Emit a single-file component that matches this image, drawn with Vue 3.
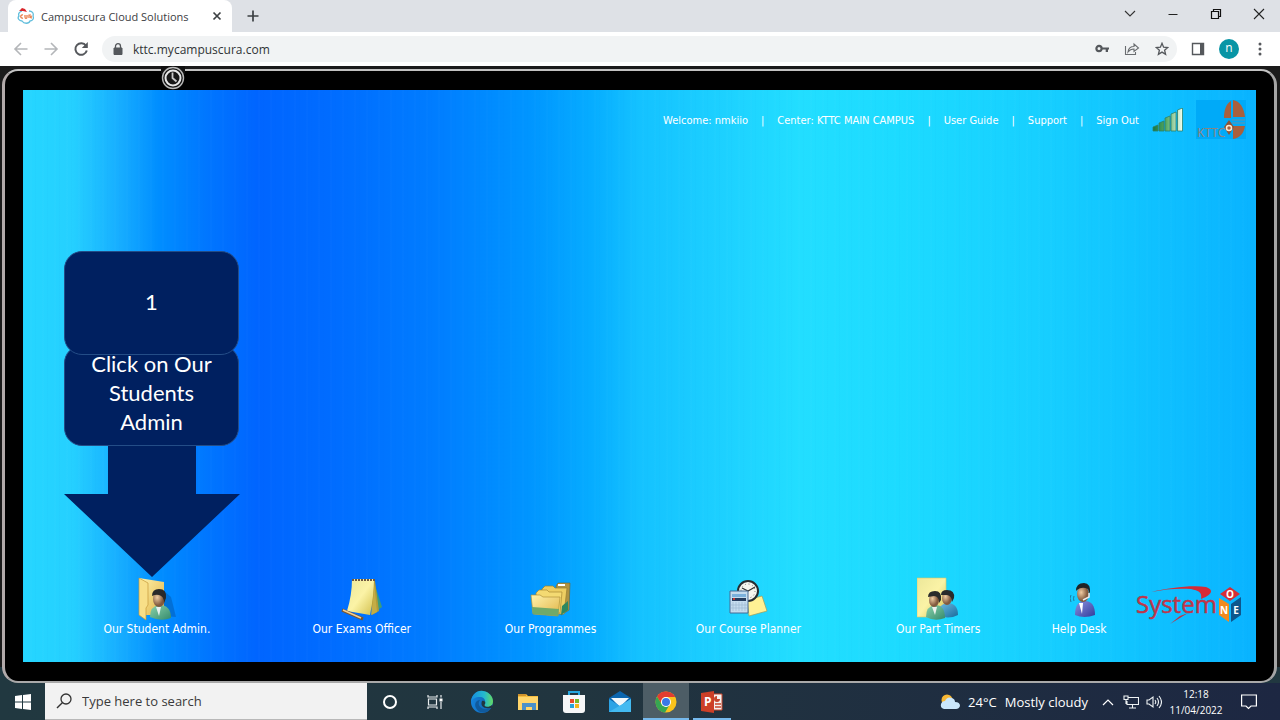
<script setup>
const topLinks = ['Welcome: nmkiio', 'Center: KTTC MAIN CAMPUS', 'User Guide', 'Support', 'Sign Out']
</script>

<template>
  <div class="page">
    <header class="tabstrip">
      <div class="tab">
        <svg class="favicon" width="18" height="18" viewBox="0 0 18 18">
          <path d="M5 4C2 5 1 7 2 9c-2 2 0 5 3 5 2 3 7 3 8 0 3 0 4-3 3-5 1-3-1-5-4-5" fill="#fff" stroke="#62bedc" stroke-width="1.3" />
          <path d="M2 4l3-3 3 1 2 3-4-1z" fill="#d9262b" />
          <path d="M6 8c-3-1-3 4 0 3M8 8v2c0 2 2 2 2 0V8M12 11V8l2 0M15 11c-2 0-2-2 0-2" fill="none" stroke="#e8743c" stroke-width="1.2" />
        </svg>
        <span class="tab-title">Campuscura Cloud Solutions</span>
        <button class="plain close" aria-label="Close tab">
          <svg width="10" height="10" viewBox="0 0 10 10"><path d="M1.500 1.500l7 7M8.500 1.500l-7 7" stroke="#3c4043" stroke-width="1.700" /></svg>
        </button>
      </div>
      <button class="plain newtab" aria-label="New tab">
        <svg width="12" height="12" viewBox="0 0 12 12"><path d="M6 0.500v11M0.500 6h11" stroke="#3c4043" stroke-width="1.700" /></svg>
      </button>
      <div class="window-controls">
        <button class="plain" aria-label="Search tabs"><svg width="12" height="12" viewBox="0 0 12 12"><path d="M1 3l5 5 5-5" fill="none" stroke="#333" stroke-width="1.100" /></svg></button>
        <button class="plain" aria-label="Minimise"><svg width="12" height="12" viewBox="0 0 12 12"><path d="M1.500 6.500h9" stroke="#222" /></svg></button>
        <button class="plain" aria-label="Restore"><svg width="12" height="12" viewBox="0 0 12 12"><path d="M1.500 3.500h7v7h-7zM3.500 3.500v-2h7v7h-2" fill="none" stroke="#111" stroke-width="1.200" /></svg></button>
        <button class="plain" aria-label="Close"><svg width="12" height="12" viewBox="0 0 12 12"><path d="M1 1l10 10M11 1L1 11" stroke="#222" stroke-width="1.100" /></svg></button>
      </div>
    </header>

    <div class="toolbar">
      <button class="plain tool" aria-label="Back"><svg width="16" height="16" viewBox="0 0 16 16"><path d="M14.500 8h-12M8 2L2 8l6 6" fill="none" stroke="#b4b6b9" stroke-width="1.600" /></svg></button>
      <button class="plain tool" aria-label="Forward"><svg width="16" height="16" viewBox="0 0 16 16"><path d="M1.500 8h12M8 2l6 6-6 6" fill="none" stroke="#b4b6b9" stroke-width="1.600" /></svg></button>
      <button class="plain tool" aria-label="Reload"><svg width="16" height="16" viewBox="0 0 16 16"><path d="M13 4.700A5.800 5.800 0 1 0 13.800 9.500" fill="none" stroke="#55585c" stroke-width="2" /><path d="M14.800 1v6H8.800z" fill="#55585c" /></svg></button>
      <form class="address" @submit.prevent>
        <svg width="10" height="12" viewBox="0 0 10 12"><path d="M1 5h8v6.500H1z" fill="#55585c" stroke="#55585c" stroke-linejoin="round" /><path d="M2.500 5V3.200a2.500 2.500 0 0 1 5 0V5" fill="none" stroke="#55585c" stroke-width="1.300" /></svg>
        <input class="url" type="text" aria-label="Address" value="kttc.mycampuscura.com" />
        <button class="plain addr-btn" type="button" aria-label="Passwords"><svg width="14" height="10" viewBox="0 0 14 10"><circle cx="4" cy="4.500" r="2.600" fill="none" stroke="#55585c" stroke-width="2.200" /><path d="M6.500 3.500H14v2h-1V8h-2.300V5.500H6.500z" fill="#55585c" /></svg></button>
        <button class="plain addr-btn" type="button" aria-label="Share"><svg width="16" height="14" viewBox="0 0 16 14"><path d="M1.500 4v8.500h10V10M4 10c.5-4 2.500-5.500 6-5.500V2l4.500 4L10 9.500V7C7.500 7 5.500 8 4 10z" fill="none" stroke="#6a6d70" stroke-width="1.100" /></svg></button>
        <button class="plain addr-btn" type="button" aria-label="Bookmark"><svg width="14" height="14" viewBox="0 0 14 14"><path d="M7 1.300l1.600 3.900 4.200.3-3.200 2.700 1 4.200L7 10.100l-3.600 2.300 1-4.200L1.200 5.500l4.200-.3z" fill="none" stroke="#55585c" stroke-width="1.300" /></svg></button>
      </form>
      <button class="plain side" aria-label="Side panel"><svg width="14" height="14" viewBox="0 0 14 14"><path d="M1.500 1.500h11v11h-11z" fill="none" stroke="#55585c" stroke-width="1.400" /><path d="M9 1h4v12H9z" fill="#55585c" /></svg></button>
      <button class="plain avatar" aria-label="Profile">n</button>
      <button class="plain more" aria-label="Menu"><svg width="4" height="14" viewBox="0 0 4 14" fill="#55585c"><circle cx="2" cy="2" r="1.500" /><circle cx="2" cy="7" r="1.500" /><circle cx="2" cy="12" r="1.500" /></svg></button>
    </div>

    <main class="device">
      <div class="bezel">
        <svg class="clock-badge" width="24" height="24" viewBox="0 0 24 24"><path d="M0 0h24v8H0z" fill="#111" /><circle cx="12" cy="12" r="10.500" fill="#151515" stroke="#b9b9b9" stroke-width="1.400" /><circle cx="12" cy="12" r="7.500" fill="#181818" stroke="#e6e6e6" stroke-width="2" /><path d="M11.500 6.500V12l4 3.500" fill="none" stroke="#c9c9c9" stroke-width="1.800" /></svg>
        <section class="screen">
          <div class="topbar">
            <nav class="top-links">
              <template v-for="(link, i) in topLinks" :key="link">
                <span v-if="i" class="bar">|</span>
                <a href="#">{{ link }}</a>
              </template>
            </nav>
            <svg class="signal" width="32" height="24" viewBox="0 0 32 24">
              <defs><linearGradient id="sg"><stop offset="0" stop-color="#16783f" /><stop offset=".45" stop-color="#57aa65" /><stop offset="1" stop-color="#f2fff0" /></linearGradient></defs>
              <g fill="url(#sg)" stroke="#2c8069" stroke-width=".8"><path d="M1 19l5-2v6H1zM7 15l5-2v10H7zM13 10l5-2v15h-5zM19 6l5-2v19h-5zM25.500 2l5-2v23h-5z" /></g>
            </svg>
            <svg class="kttc" width="50" height="40" viewBox="0 0 50 40">
              <path d="M0 0h50v39H0z" fill="#00aaf8" />
              <path d="M35 1c-5 3-7 9-7 17h7zM37 0c7 1 11 8 12 17H37zM37 26h12c-1 7-5 12-12 13z" fill="#a9603d" />
              <path d="M33 20l5 7-5 8-5-8z" fill="#8c5437" />
              <path d="M36 20h13M36 23h13" stroke="#6f8ea4" />
              <circle cx="33" cy="28" r="2.500" fill="#a9603d" stroke="#ffe9cf" stroke-width="1.500" />
              <text x="1" y="37" class="kttc-word">KTTC</text>
            </svg>
          </div>

          <div class="callout">
            <div class="step number">1</div>
            <div class="step words">Click on Our Students Admin</div>
            <svg width="176" height="131" viewBox="0 0 176 131"><path d="M44 0h88v48h44L88 131 0 48h44z" fill="#002060" /></svg>
          </div>

          <nav class="shortcuts">
            <a href="#" class="shortcut">
              <svg width="40" height="44" viewBox="0 0 40 44">
                <defs>
                  <linearGradient id="fold" x1="0" y1="0" x2="1" y2="1"><stop offset="0" stop-color="#fff3ad" /><stop offset="1" stop-color="#e0b447" /></linearGradient>
                  <linearGradient id="note" x1="0" y1="0" x2="1" y2="1"><stop offset="0" stop-color="#ece79a" /><stop offset=".5" stop-color="#fbf3a6" /><stop offset="1" stop-color="#d2bf4c" /></linearGradient>
                  <radialGradient id="face" cx=".35" cy=".4"><stop offset="0" stop-color="#f0cda3" /><stop offset="1" stop-color="#825a3f" /></radialGradient>
                  <linearGradient id="green" x1="0" y1="0" x2="1" y2="1"><stop offset="0" stop-color="#8bd3ac" /><stop offset="1" stop-color="#348a6c" /></linearGradient>
                  <linearGradient id="blue" x1="0" y1="0" x2="1" y2="1"><stop offset="0" stop-color="#71bde2" /><stop offset="1" stop-color="#176b9d" /></linearGradient>
                </defs>
                <path d="M27 39l12 1-5-20-7-6z" fill="#08295a" opacity=".25" />
                <path d="M2 1l25 4v33H9z" fill="url(#fold)" /><path d="M2 1l9 5v22l-2 3v12L2 38z" fill="#f8df88" stroke="#c59a39" stroke-width=".7" />
                <path d="M13 40q0-11 9-12 12 0 12 13-10 4-21-1z" fill="url(#green)" /><path d="M19 30l3 9 2-9z" fill="#e7f1ef" />
                <ellipse cx="22" cy="22" rx="6" ry="8" fill="url(#face)" /><path d="M15 19q0-7 7-7 8 0 7 9l-2 5q0-7-5-8-3-1-7 1z" fill="#29292a" />
              </svg>
              <span>Our Student Admin.</span>
            </a>
            <a href="#" class="shortcut">
              <svg width="42" height="44" viewBox="0 0 42 44">
                <path d="M33 5l8 25-8 6z" fill="#3a9c7e" /><path d="M28 5l6-1 4 30-7 4z" fill="#b29b38" />
                <path d="M11 2h22q0 16-4 36L6 34Q11 18 11 2z" fill="url(#note)" />
                <path d="M33 4l3 31-6 3q3-18 3-34z" fill="#c4ad46" />
                <path d="M11 3h23" stroke="#6d5742" stroke-width="2" stroke-dasharray="2 1" />
                <path d="M1 33l21 9" stroke="#7b5730" stroke-width="3" /><path d="M2 33l18 8" stroke="#f3cf94" stroke-width="1.600" />
              </svg>
              <span>Our Exams Officer</span>
            </a>
            <a href="#" class="shortcut">
              <svg width="42" height="44" viewBox="0 0 42 44">
                <path d="M26 9l2-3h12l-1 27-8 5z" fill="#af9342" stroke="#70642e" stroke-width=".6" /><path d="M12 12l3-3h8l2 2h12l-3 26H13z" fill="#edce62" stroke="#967e31" stroke-width=".7" />
                <path d="M6 16l3-3h8l2 2h13l-2 21H7z" fill="#f4da72" stroke="#a98a34" stroke-width=".7" />
                <path d="M1 18h9l3 2h17l-2 19-25-2z" fill="url(#fold)" stroke="#b1933b" stroke-width=".7" /><path d="M2 30l27 2-1 7-25-2z" fill="#6fa969" /><path d="M31 38l7-5v-9l-6 5z" fill="#2e8860" />
                <path d="M28 8h7" stroke="#fff" stroke-width="2" />
              </svg>
              <span>Our Programmes</span>
            </a>
            <a href="#" class="shortcut">
              <svg width="42" height="44" viewBox="0 0 42 44">
                <path d="M20 23l15-4 5 15-18 5z" fill="#fff194" stroke="#a59c56" stroke-width=".7" />
                <circle cx="21" cy="14" r="10" fill="#f6f5ef" stroke="#282c30" stroke-width="2" /><circle cx="21" cy="14" r="7" fill="none" stroke="#777" stroke-dasharray="1 2.700" /><path d="M15 11l6 3 7-4" fill="none" stroke="#333" stroke-width="1.200" />
                <path d="M3 14h18v22H3z" fill="#c5dcef" stroke="#476b95" /><path d="M5 17h14v3H5z" fill="#7ab0dc" /><path d="M5 21h14v3H5z" fill="#263c5e" /><path d="M6 25v9M9 25v9M12 25v9M15 25v9M18 25v9M4 28h16M4 31h16" stroke="#9fb9d2" stroke-width=".7" /><path d="M6 22h2" stroke="#c73636" stroke-width="2" />
              </svg>
              <span>Our Course Planner</span>
            </a>
            <a href="#" class="shortcut">
              <svg width="42" height="44" viewBox="0 0 42 44">
                <path d="M0 1h29v39H0z" fill="url(#note)" stroke="#dcc764" stroke-width=".6" />
                <path d="M21 38q0-11 9-12 11 0 11 12-10 5-20 0z" fill="url(#blue)" /><ellipse cx="30" cy="21" rx="5" ry="7" fill="url(#face)" /><path d="M24 18q0-5 6-5 8 0 7 8l-2 4q0-6-5-7z" fill="#292b2b" />
                <path d="M9 40q0-11 9-12 10 0 10 13-10 4-19-1z" fill="url(#green)" /><path d="M15 30l3 8 2-8z" fill="#ecf1ed" /><ellipse cx="17" cy="23" rx="5" ry="7" fill="url(#face)" /><path d="M11 20q0-6 7-6 7 0 6 9l-2 3q0-7-5-7z" fill="#292b2b" />
              </svg>
              <span>Our Part Timers</span>
            </a>
            <a href="#" class="shortcut">
              <svg class="agent" width="26" height="44" viewBox="0 0 26 44">
                <defs><linearGradient id="violet" x1="0" y1="0" x2="1" y2="1"><stop offset="0" stop-color="#8c92e0" /><stop offset="1" stop-color="#313c9b" /></linearGradient></defs>
                <path d="M5 38q0-14 10-14 10 0 10 14-11 4-20 0z" fill="url(#violet)" /><path d="M9 26l3 11 1-11z" fill="#fff" />
                <ellipse cx="13" cy="17" rx="6" ry="8" fill="url(#face)" /><path d="M6 14q0-8 8-8 7 0 6 11l-2-5q-6-3-11 1z" fill="#202425" />
                <path d="M19 16v4l-6 3" fill="none" stroke="#e6e9ec" stroke-width="1.500" /><path d="M1 18q-2 3 0 7M4 19q-1 3 0 5" fill="none" stroke="#237b9c" />
              </svg>
              <span>Help Desk</span>
            </a>
            <a href="#" class="brand" aria-label="System One">
              <svg width="108" height="40" viewBox="0 0 108 40">
                <path d="M15 6C33 2 55-1 70 1c9 3 5 8-5 12 1-6-1-8-10-10-12-1-26 0-40 3z" fill="#d62b36" />
                <path d="M52 27L34 38l10-8z" fill="#c52f42" />
                <text x="0" y="27" class="logo-word">System</text>
                <path d="M94 1l10 7-10 7-10-7z" fill="#d42d36" /><path d="M83 12l10 6v18l-10-7z" fill="#f28a20" /><path d="M95 18l10-7v18l-10 7z" fill="#0d568d" />
                <text x="94" y="12" class="cube-letter">O</text>
                <text x="88" y="28" class="cube-letter">N</text>
                <text x="100" y="28" class="cube-letter">E</text>
              </svg>
            </a>
          </nav>
        </section>
      </div>
    </main>

    <footer class="taskbar">
      <button class="plain start" aria-label="Start"><svg width="16" height="16" viewBox="0 0 16 16"><path d="M0 2l7-1v6.500H0zM8 1l8-1v7.500H8zM0 8.500h7V15l-7-1zM8 8.500h8V16l-8-1z" fill="#fff" /></svg></button>
      <label class="search">
        <svg width="16" height="16" viewBox="0 0 16 16"><circle cx="10" cy="6" r="5" fill="none" stroke="#333" stroke-width="1.300" /><path d="M6.300 9.700L1 15" stroke="#333" stroke-width="1.400" /></svg>
        <input type="text" placeholder="Type here to search" aria-label="Type here to search" />
      </label>
      <button class="plain task" aria-label="Cortana"><svg width="16" height="16" viewBox="0 0 16 16"><circle cx="8" cy="8" r="6" fill="none" stroke="#fff" stroke-width="2" /></svg></button>
      <button class="plain task" aria-label="Task view"><svg width="18" height="16" viewBox="0 0 18 16"><path d="M1 1v2h9V1M1 15v-2h9v2M1.500 5h8v6h-8zM14 1v2.500M14 8v7" fill="none" stroke="#e8eced" stroke-width="1.200" /><path d="M12.500 4.500h3v3h-3z" fill="#fff" /></svg></button>
      <button class="plain task" aria-label="Edge">
        <svg width="24" height="24" viewBox="0 0 24 24">
          <defs><linearGradient id="edge1"><stop offset="0" stop-color="#168ce0" /><stop offset=".6" stop-color="#24b9ce" /><stop offset="1" stop-color="#65da62" /></linearGradient><linearGradient id="edge2"><stop offset="0" stop-color="#1382dc" /><stop offset="1" stop-color="#135da8" /></linearGradient></defs>
          <circle cx="12" cy="12" r="11" fill="url(#edge2)" /><path d="M1 12C2 4 7 0 13 1c8 1 12 9 9 14-3 4-9 2-8-1 3-3 0-7-4-7-5 0-8 2-9 5z" fill="url(#edge1)" /><path d="M10 10c-4 5 2 12 11 8-4 6-12 6-15 0-2-4 0-8 4-8z" fill="#105a9d" /><path d="M12 11c-2 5 2 8 8 7l3 0-1-3c-3 3-9 2-7-1 1-1 0-4-3-3z" fill="#21353f" />
        </svg>
      </button>
      <button class="plain task" aria-label="File Explorer"><svg width="22" height="20" viewBox="0 0 22 20"><path d="M1 2h8l2 2h10v14H1z" fill="#f6bd3f" /><path d="M1 5h20v13H1z" fill="#ffd66b" /><path d="M5 18v-7h14v7h-4v-3H9v3z" fill="#4b91c9" /><path d="M1 3h8" stroke="#cf932c" stroke-width="2" /></svg></button>
      <button class="plain task" aria-label="Store"><svg width="24" height="24" viewBox="0 0 24 24"><path d="M7 6V2h10v4" fill="none" stroke="#25a6df" stroke-width="2" /><path d="M1 5h22v15q0 3-3 3H4q-3 0-3-3z" fill="#f5f6f7" /><path d="M8 9h4v4H8z" fill="#e64b2c" /><path d="M13 9h4v4h-4z" fill="#77b829" /><path d="M8 14h4v4H8z" fill="#28a3dc" /><path d="M13 14h4v4h-4z" fill="#f4b61e" /></svg></button>
      <button class="plain task" aria-label="Mail"><svg width="24" height="22" viewBox="0 0 24 22"><path d="M1 7l11-7 11 7v14H1z" fill="#0b65ae" /><path d="M3 7h18l-9 9z" fill="#edf7fc" /><path d="M1 8l11 7 11-7v13H1z" fill="#2da4e6" /><path d="M23 8v13H1z" fill="#43baf1" /><path d="M4 7h16l-8 7z" fill="#f2f8fb" /></svg></button>
      <button class="plain task active" aria-label="Chrome"><svg width="22" height="22" viewBox="0 0 22 22"><circle cx="11" cy="11" r="10.500" fill="#fbc31c" /><path d="M2 5.500A10.500 10.500 0 0 1 20.300 6H11a5 5 0 0 0-4.500 7z" fill="#e23d31" /><path d="M2 5.500A10.500 10.500 0 0 0 10 21.500l5-8.500a5 5 0 0 1-8.500 0z" fill="#36a652" /><circle cx="11" cy="11" r="5" fill="#fff" /><circle cx="11" cy="11" r="4" fill="#3978e7" /></svg></button>
      <button class="plain task open" aria-label="PowerPoint"><svg width="22" height="22" viewBox="0 0 22 22"><path d="M11 3h10v16H11z" fill="#f5f1ef" stroke="#c6462d" /><path d="M16 5a3 3 0 1 0 3 3h-3z" fill="#c6462d" /><path d="M14 13h6M14 16h6" stroke="#c6462d" stroke-width="1.300" /><path d="M0 2l13-2v22L0 20z" fill="#cc3f27" /><text x="3" y="15" class="ppt">P</text></svg></button>
      <div class="tray">
        <button class="plain weather"><svg width="20" height="16" viewBox="0 0 20 16"><circle cx="7" cy="6" r="5.500" fill="#f7b733" /><path d="M4 15q-4-1-3-5 1-3 4-3 2-5 7-3 3 1 3 4 5 0 5 4-1 3-4 3z" fill="#cae6fb" /></svg><span>24°C</span><span>Mostly cloudy</span></button>
        <button class="plain tray-icon" aria-label="Hidden icons"><svg width="12" height="8" viewBox="0 0 12 8"><path d="M1 7l5-5 5 5" fill="none" stroke="#fff" stroke-width="1.200" /></svg></button>
        <button class="plain tray-icon" aria-label="Network"><svg width="16" height="14" viewBox="0 0 16 14"><path d="M5 2.500h10.500v7H4V6M9.500 10v3M6 13h7M1 1h4v3.500H1zM3 5v4" fill="none" stroke="#eef2f4" stroke-width="1.100" /></svg></button>
        <button class="plain tray-icon" aria-label="Volume"><svg width="16" height="14" viewBox="0 0 16 14"><path d="M1 5h2l4-3v10L3 9H1zM9 5q1.500 2 0 4M11 3q3 4 0 8M13 1q5 6 0 12" fill="none" stroke="#eef2f4" stroke-width="1.100" /></svg></button>
        <button class="plain clock"><span>12:18</span><span>11/04/2022</span></button>
        <button class="plain notice" aria-label="Notifications"><svg width="16" height="16" viewBox="0 0 16 16"><path d="M.600 1h14.800v11H10l-2.500 2.500L5 12H.600z" fill="none" stroke="#fff" stroke-width="1.200" /></svg></button>
      </div>
    </footer>
  </div>
</template>

<style>
body { margin: 0; }
</style>

<style scoped>
* { box-sizing: border-box; }
.page { min-height: 100vh; display: flex; flex-direction: column; font-family: "Open Sans", "Noto Sans", sans-serif; color: #3c4043; overflow: hidden; }
svg { display: block; flex-shrink: 0; }
a { color: inherit; text-decoration: none; }
.plain { display: flex; align-items: center; justify-content: center; padding: 0; margin: 0; border: 0; background: none; color: inherit; font: inherit; flex-shrink: 0; }

.tabstrip { display: flex; height: 32px; background: #dee1e6; }
.tab { display: flex; align-items: center; width: 224px; margin-left: 8px; padding: 0 10px 0 9px; background: #fff; border-radius: 8px 8px 0 0; }
.tab-title { flex: 1; margin-left: 6px; font-size: 11px; white-space: nowrap; }
.close { width: 10px; }
.newtab { width: 42px; }
.window-controls { display: flex; margin-left: auto; height: 28px; }
.window-controls .plain { width: 43px; }

.toolbar { display: flex; align-items: center; height: 34px; padding-left: 6px; background: #fff; }
.tool { width: 30px; height: 30px; }
.address { display: flex; align-items: center; flex: 1; height: 26px; margin-left: 6px; padding: 0 0 0 11px; border-radius: 13px; background: #f1f3f4; }
.url { flex: 1; min-width: 0; margin-left: 10px; padding: 0; border: 0; outline: 0; background: none; color: #303336; font: 12px "Open Sans", "Noto Sans", sans-serif; }
.addr-btn { width: 30px; height: 26px; }
.side { width: 42px; }
.avatar { width: 20px; height: 20px; border-radius: 50%; background: #0895a5; color: #fff; font-size: 12px; line-height: 16px; padding-bottom: 2px; }
.more { width: 41px; }

.device { flex: 1; display: flex; padding: 3px 3px 0 2px; background: linear-gradient(#1b1b1b calc(100% - 16px), #213840 calc(100% - 16px)); }
.bezel { position: relative; flex: 1; display: flex; padding: 19px 18px; border: 2px solid #a9a9a9; border-top: 2px solid #c2c2c2; border-left: 3px solid #b2aaaa; border-right: 3px solid #a5a5a5; border-radius: 16px; background: #000; }
.clock-badge { position: absolute; left: 156px; top: -5px; }
.screen {
  position: relative; flex: 1; display: flex; flex-direction: column; justify-content: space-between;
  background:
    repeating-linear-gradient(90deg, rgba(0, 80, 200, 0.02) 0 1px, transparent 1px 7px, rgba(255, 255, 255, 0.01) 7px 9px, transparent 9px 12px),
    linear-gradient(90deg, #25d6ff 0%, #25d0ff 4%, #16acff 8%, #008eff 11%, #0076ff 15%, #0065ff 19%, #006cff 25%, #007cff 33%, #0095ff 41%, #06acff 46%, #14c2ff 50%, #1dd1ff 57%, #22deff 63%, #1cdbff 71%, #17d0ff 82%, #10c4ff 90%, #09b3ff 100%);
  color: #fff; font-family: "DejaVu Sans Condensed", "DejaVu Sans", sans-serif; font-size: 11px;
}
.topbar { display: flex; align-items: center; justify-content: flex-end; height: 60px; padding-right: 10px; }
.top-links { display: flex; align-items: center; gap: 13px; white-space: nowrap; }
.signal { margin-left: 13px; }
.kttc { margin-left: 12px; }
.kttc-word { font: 12px "Noto Sans", sans-serif; fill: #8a8580; }

.callout { position: absolute; left: 41px; top: 161px; width: 175px; display: flex; flex-direction: column; font-family: Lato, sans-serif; font-size: 22px; line-height: 29px; text-align: center; }
.step { position: relative; display: flex; align-items: center; justify-content: center; padding: 0 24px 4px; border: 1px solid #244d87; border-radius: 18px; background: #002060; }
.number { z-index: 1; height: 104px; }
.words { height: 101px; margin-top: -10px; padding-bottom: 6px; }

.shortcuts { display: grid; grid-template-columns: 268fr 142fr 236fr 160fr 220fr 62fr 146fr; align-items: end; padding-bottom: 25px; }
.shortcut { display: flex; flex-direction: column; align-items: center; min-width: 0; white-space: nowrap; font-size: 12px; line-height: 16px; }
.agent { margin-left: 8px; }
.brand { justify-self: end; padding: 0 12px 11px 0; }
.logo-word { font: 24px "Open Sans", sans-serif; fill: #bf3549; stroke: #bf3549; stroke-width: 0.5px; }
.cube-letter { font: bold 10px "Open Sans", sans-serif; fill: #fff; text-anchor: middle; }
.ppt { font: bold 12px "Open Sans", sans-serif; fill: #fff; }

.taskbar { display: flex; align-items: stretch; height: 37px; background: linear-gradient(90deg, #213840, #21353f 45%, #1d2742); color: #fff; }
.start { width: 45px; }
.search { display: flex; align-items: center; width: 322px; padding-left: 11px; border-bottom: 1px solid #b8b8b8; background: #f2f2f2; }
.search input { flex: 1; min-width: 0; margin-left: 10px; padding: 0; border: 0; outline: 0; background: none; font: 13px "Open Sans", "Noto Sans", sans-serif; }
.search input::placeholder { color: #3a3a3a; opacity: 1; }
.task { width: 46px; }
.active { background: #4d5d66; border-bottom: 2px solid #76b9ed; border-top: 2px solid transparent; }
.open { width: 38px; margin: 0 4px; border-bottom: 2px solid #76b9ed; border-top: 2px solid transparent; }
.tray { display: flex; margin-left: auto; padding-right: 19px; }
.weather { gap: 8px; margin-right: 8px; font-size: 13px; white-space: nowrap; }
.tray-icon { width: 23px; }
.clock { flex-direction: column; width: 62px; font-size: 10px; line-height: 16px; }
.notice { width: 24px; margin-left: 10px; }
</style>
